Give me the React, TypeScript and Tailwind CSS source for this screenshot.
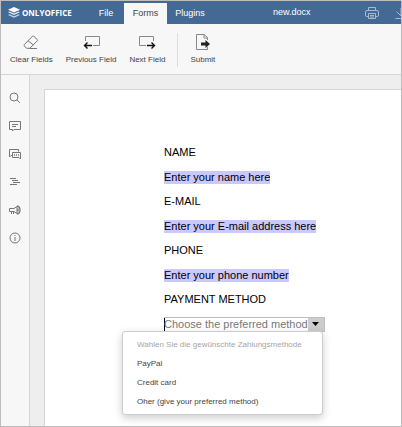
import React from "react";

type IconProps = { className?: string };

const Logo = () => (
  <svg viewBox="0 0 24 22" className="h-[11px] w-3" aria-hidden="true">
    <path d="M12 0 24 5.500 12 11 0 5.500Z" fill="#fff" />
    <path d="M3 9 0 10.500 12 16 24 10.500 21 9 12 13Z" fill="#fff" opacity=".85" />
    <path d="M3 14.500 0 16 12 21.500 24 16 21 14.500 12 18.500Z" fill="#fff" opacity=".7" />
  </svg>
);

const Svg = ({ className, box, children }: IconProps & { box: string; children: React.ReactNode }) => (
  <svg viewBox={box} className={className} fill="none" stroke="currentColor" strokeWidth="1" aria-hidden="true">
    {children}
  </svg>
);

const EraserIcon = () => (
  <Svg box="0 0 16 16" className="size-4">
    <path d="M9.500 2.200Q10 1.700 10.600 2.200L14.300 5.500Q14.900 6.100 14.400 6.700L6.800 14.300H3.600L1.400 12Q.8 11.200 1.400 10.500ZM5 6.800 10.300 10.800M6.500 14.500H14" stroke="#777" />
  </Svg>
);

const PreviousIcon = () => (
  <Svg box="0 0 17 16" className="h-4 w-[17px]">
    <path d="M2.500 7V2.500H16.500V11.500H10" stroke="#888" />
    <path d="M9 11.500H1.500M4.500 8.500 1.500 11.500 4.500 14.500" stroke="#111" strokeWidth="1.400" />
  </Svg>
);

const NextIcon = () => (
  <Svg box="0 0 17 16" className="h-4 w-[17px]">
    <path d="M14.500 7V2.500H.5V11.500H7" stroke="#888" />
    <path d="M8 11.500H15.500M12.500 8.500 15.500 11.500 12.500 14.500" stroke="#111" strokeWidth="1.400" />
  </Svg>
);

const SubmitIcon = () => (
  <Svg box="0 0 16 17" className="h-[17px] w-4">
    <path d="M12.500 7V4.500L9 1.500H1.500V16.500H12.500V14M9 1.500V5H12.500" stroke="#888" />
    <path d="M6 9.500H10.500V7L15 11 10.500 15V12.500H6Z" fill="#222" stroke="none" />
  </Svg>
);

const PrinterIcon = () => (
  <Svg box="0 0 14 12" className="h-3 w-3.5">
    <path d="M3.500 3.500V.5H10.500V3.500M3 9.500H1.500Q.5 9.500.5 8V5Q.5 3.500 2 3.500H12Q13.500 3.500 13.500 5V8Q13.500 9.500 12.500 9.500H11M3.500 6.500H10.500V11.500H3.500ZM5 8.500H9M5 10H9" />
  </Svg>
);

const DownloadIcon = () => (
  <Svg box="0 0 12 12" className="h-3 w-3 shrink-0">
    <path d="M6 1V9M1.500 4.500 6 9 10.500 4.500M.5 11.500H11.500" />
  </Svg>
);

const sideTools = [
  {
    label: "Search",
    icon: (
      <Svg box="0 0 12 12" className="size-3">
        <circle cx="5" cy="5" r="4" />
        <path d="M8 8 11 11" />
      </Svg>
    ),
  },
  {
    label: "Comments",
    icon: (
      <Svg box="0 0 12 12" className="size-3">
        <path d="M.5 1.500H11.500V9.500H5L3.500 11V9.500H.5ZM3 4.500H9M3 6.500H7" />
      </Svg>
    ),
  },
  {
    label: "Chat",
    icon: (
      <Svg box="0 0 12 12" className="size-3">
        <path d="M3.500 7.500H2L.5 9V1.500H9.500V3.500M3.500 4.500H11.500V11L10 9.500H3.500Z" />
        <path d="M5 7H10" strokeDasharray="1 1" strokeWidth="1.500" />
      </Svg>
    ),
  },
  {
    label: "Headings",
    icon: (
      <Svg box="0 0 12 12" className="size-3">
        <path d="M1 2.500H7M3 4.500H9M4 6.500H11M1 8.500H8" />
      </Svg>
    ),
  },
  {
    label: "Feedback and Support",
    icon: (
      <Svg box="0 0 12 12" className="size-3">
        <path d="M.5 4.500H5L8 2.500V9.500L5 7.500H.5ZM2.500 7.500V10M4.500 7.500V10" />
        <path d="M8 2Q11 2.500 11 6 11 9.500 8 10M9 4.500V7.500" strokeWidth="1.300" />
      </Svg>
    ),
  },
  {
    label: "About",
    icon: (
      <Svg box="0 0 12 12" className="size-3">
        <circle cx="6" cy="6" r="5" />
        <path d="M6 3V4M6 5V9" />
      </Svg>
    ),
  },
];

const fields = [
  { id: "name", label: "NAME", text: "Enter your name here" },
  { id: "email", label: "E-MAIL", text: "Enter your E-mail address here" },
  { id: "phone", label: "PHONE", text: "Enter your phone number" },
];

const options = ["PayPal", "Credit card", "Oher (give your preferred method)"];

const ToolButton = ({ label, children }: { label: string; children: React.ReactNode }) => (
  <button type="button" className="flex flex-col items-center gap-1 whitespace-nowrap">
    <span className="flex h-[17px] items-center">{children}</span>
    <span className="leading-3">{label}</span>
  </button>
);

export default function App() {
  return (
    <div className="flex min-h-screen flex-col overflow-hidden border border-[#bdbdbd] bg-[#eee] font-['Liberation_Sans',Arial,sans-serif] text-[8px] text-[#444]">
      <header className="flex h-[23px] items-stretch bg-[#446995] text-white">
        <div className="flex w-[87px] shrink-0 items-center gap-0.5 pl-[7px] font-['Open_Sans',sans-serif] font-bold">
          <Logo />
          ONLYOFFICE
        </div>
        <nav className="flex text-[9px] font-medium">
          <button type="button" className="w-9 pt-[3px]">File</button>
          <button type="button" className="mt-0.5 w-[43px] bg-[#f7f7f7] pt-px text-[#444]">Forms</button>
          <button type="button" className="w-[46px] pt-[3px]">Plugins</button>
        </nav>
        <div className="flex grow items-center overflow-hidden pl-[60px] text-[9px] font-medium">
          new.docx
          <button type="button" aria-label="Print" className="ml-auto pr-4 text-[#a9bad0]"><PrinterIcon /></button>
          <button type="button" aria-label="Download" className="-mr-1.5 text-[#a9bad0]"><DownloadIcon /></button>
        </div>
      </header>

      <div className="flex h-[51px] items-start border-b border-[#d5d5d5] bg-[#f7f7f7] pt-[9px] pl-[9px]">
        <div className="flex gap-[13px]">
          <ToolButton label="Clear Fields"><EraserIcon /></ToolButton>
          <ToolButton label="Previous Field"><PreviousIcon /></ToolButton>
          <ToolButton label="Next Field"><NextIcon /></ToolButton>
        </div>
        <div className="mx-3 h-[34px] w-px bg-[#ddd]" />
        <ToolButton label="Submit"><SubmitIcon /></ToolButton>
      </div>

      <div className="flex grow">
        <aside className="flex w-[29px] shrink-0 flex-col items-center gap-4 border-r border-[#d5d5d5] bg-[#f7f7f7] pt-[17px] text-[#777]">
          {sideTools.map((tool) => (
            <button key={tool.label} type="button" aria-label={tool.label} className="size-3">
              {tool.icon}
            </button>
          ))}
        </aside>

        <main className="mt-3.5 ml-3.5 grow border-t border-l border-[#d5d5d5] bg-white pt-[50px] pl-[119px] text-[11px] text-black">
          {fields.map((field) => (
            <div key={field.id}>
              <label htmlFor={field.id} className="flex h-[25px] items-center">{field.label}</label>
              <div className="flex h-6 items-center">
                <input id={field.id} defaultValue={field.text} className="field-sizing-content h-[13px] bg-[#c9c8ff] leading-[13px] outline-none" />
              </div>
            </div>
          ))}
          <label htmlFor="payment" className="flex h-[25px] items-center">PAYMENT METHOD</label>
          <div className="relative flex h-6 w-max items-center">
            <div className="flex h-[15px] items-stretch border-y border-r border-[#c0c0c0]">
              <input
                id="payment"
                role="combobox"
                aria-expanded="true"
                aria-controls="methods"
                placeholder="Choose the preferred method"
                className="field-sizing-content leading-[13px] shadow-[inset_1px_0_#000] outline-none placeholder:text-[#777]"
              />
              <button type="button" aria-label="Show options" className="flex w-4 items-center justify-center bg-[#ccc]">
                <svg viewBox="0 0 7 4" className="h-1 w-[7px]" aria-hidden="true"><path d="M0 0H7L3.500 4Z" fill="#000" /></svg>
              </button>
            </div>
            <ul id="methods" role="listbox" className="absolute top-[19px] -left-[42px] w-[201px] rounded-[3px] border border-[#ccc] bg-white py-[3px] text-[8px] text-[#444] shadow-[0_3px_8px_rgba(0,0,0,0.2)]">
              <li role="option" aria-disabled="true" aria-selected="false" className="flex h-[19px] items-center pl-3.5 text-[#a5a5a5]">
                Wahlen Sie die gewünschte Zahlungsmethode
              </li>
              {options.map((option) => (
                <li key={option} role="option" aria-selected="false" className="flex h-[19px] items-center pl-3.5">{option}</li>
              ))}
            </ul>
          </div>
        </main>
      </div>
    </div>
  );
}
